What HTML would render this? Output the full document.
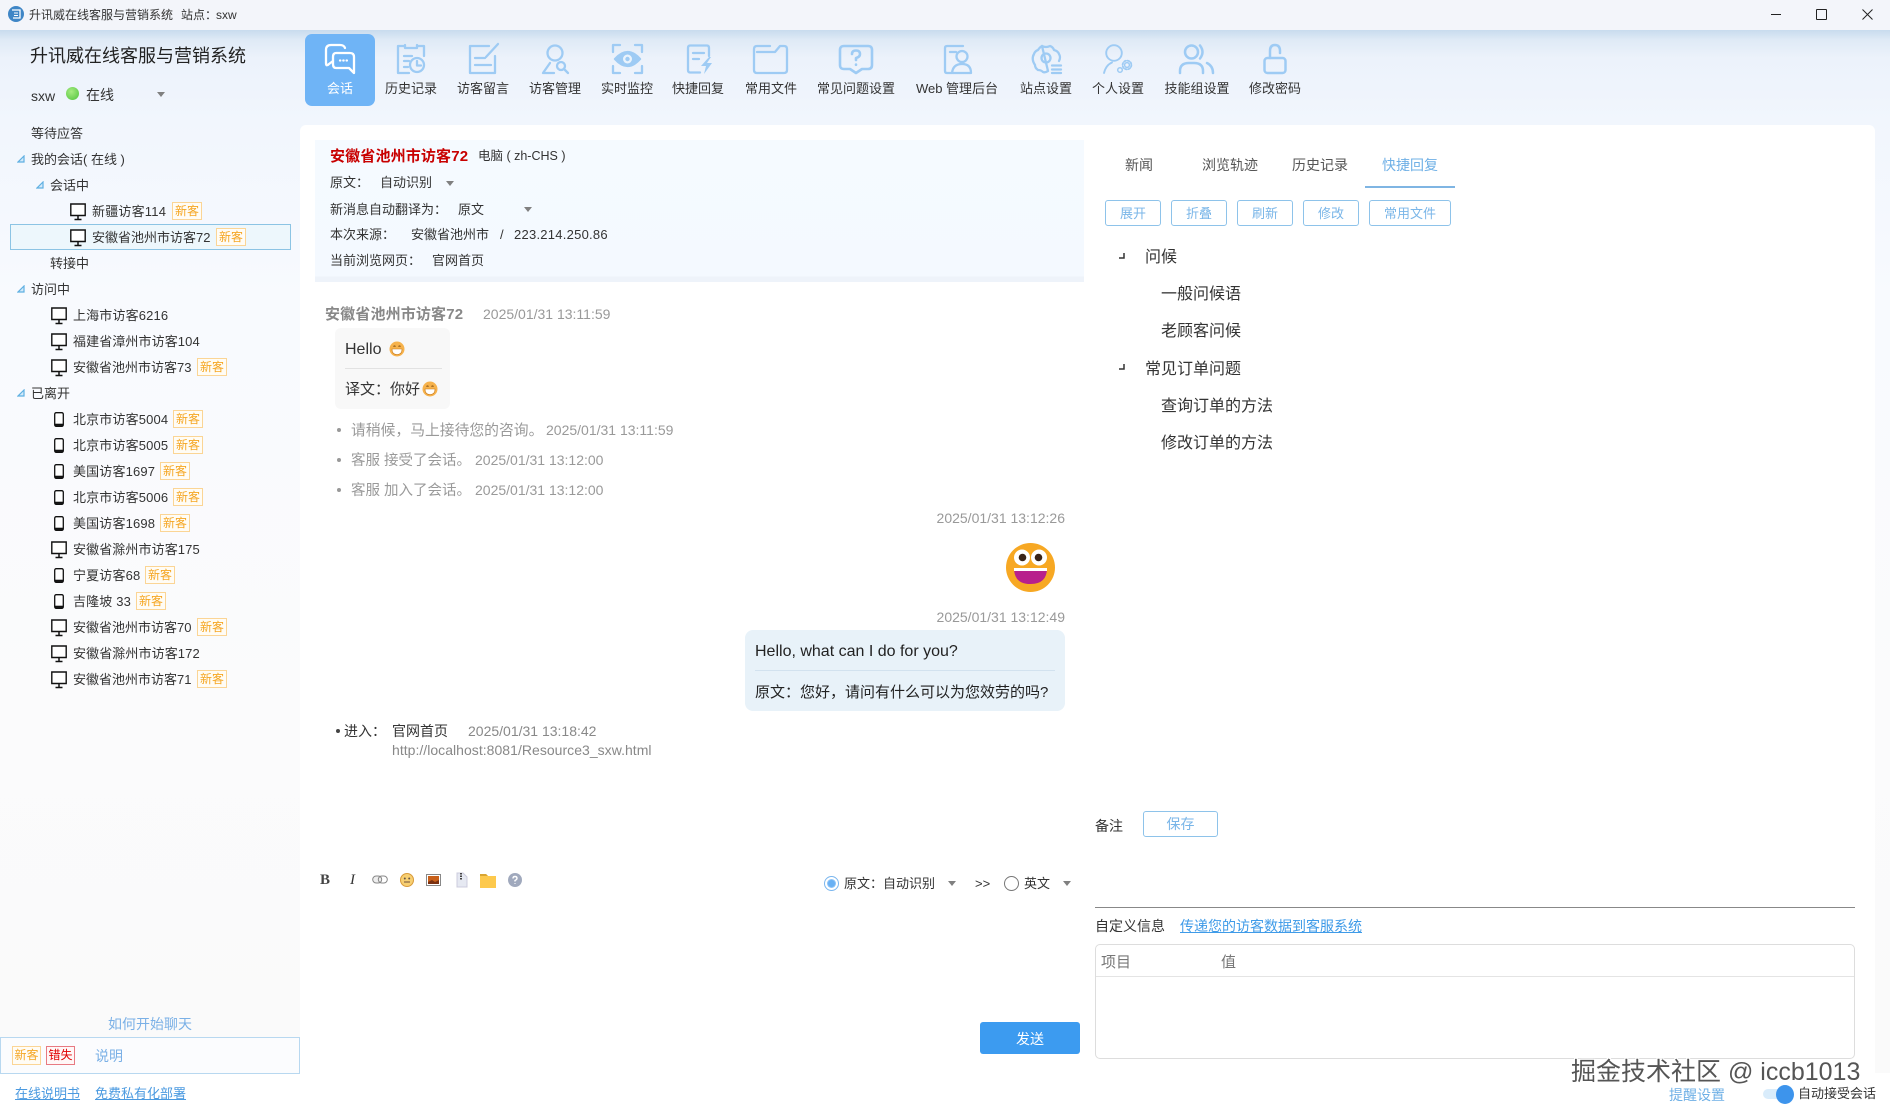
<!DOCTYPE html>
<html lang="zh-CN"><head><meta charset="utf-8"><title>升讯威在线客服与营销系统</title>
<style>
html,body{margin:0;padding:0;width:1890px;height:1114px;overflow:hidden}
body{position:relative;font-family:"Liberation Sans","Noto Sans CJK SC",sans-serif;font-size:13px;color:#333;background:linear-gradient(#c8dbee 30px,#dfeaf6 40px,#ecf2fb 58px,#f1f6fd 120px,#f8fafe 300px,#fbfbfc 700px,#fafafa 1073px)}
.a{position:absolute}
.t{position:absolute;white-space:nowrap;line-height:20px;height:20px}
.r{margin-top:1px}
.b{position:absolute;box-sizing:border-box;width:30px;height:18px;border:1px solid #fbd595;background:#fffcf5;color:#f5a623;font-size:12px;line-height:16px;text-align:center}
.arr{position:absolute;width:0;height:0;border-left:4px solid transparent;border-right:4px solid transparent;border-top:5px solid #808080}
.btn{position:absolute;box-sizing:border-box;height:26px;top:200px;border:1px solid #8ec3ea;border-radius:3px;color:#7ab6e8;text-align:center;line-height:25px;font-size:13px;background:#fff}
.lbl{position:absolute;top:79px;line-height:20px;white-space:nowrap;transform:translateX(-50%);color:#333;font-size:13px}
.ic{position:absolute;top:44px;overflow:visible;fill:none;stroke:#9ecbf4;stroke-width:2.300;stroke-linecap:round;stroke-linejoin:round}
.g{color:#999;font-size:14px}
svg{display:block}
</style></head><body>
<svg width="0" height="0" style="position:absolute"><defs>
<symbol id="m" viewBox="0 0 16 18"><path d="M.8 1h14.400v11.500H.8z" fill="#fff" stroke="#111" stroke-width="1.400"/><path d="M8 13v3M4.500 16.500h7" stroke="#111" stroke-width="1.500" fill="none"/></symbol>
<symbol id="p" viewBox="0 0 10 15"><rect x=".7" y=".7" width="8.600" height="13.600" rx="1.500" fill="#fff" stroke="#111" stroke-width="1.300"/><path d="M1 12.800h8" stroke="#111" stroke-width="2.200"/></symbol>
<symbol id="tr" viewBox="0 0 8 8"><path d="M7 1V7H1Z" fill="#d5eafa" stroke="#5fb0e2" stroke-width="1.200"/></symbol>
<symbol id="gr" viewBox="0 0 16 16"><circle cx="8" cy="8" r="7.500" fill="#f6b24c"/><path d="M3 8h10q0 5.500-5 5.500t-5-5.500z" fill="#fff" stroke="#c87818" stroke-width=".6"/><path d="M4.500 5.500q1-1 2 0M9.500 5.500q1-1 2 0" stroke="#7a4a10" fill="none"/></symbol>
</defs></svg>

<!-- title bar -->
<div class="a" style="left:0;top:0;width:1890px;height:30px;background:#f3f5fa"></div>
<svg class="a" style="left:8px;top:6px" width="16" height="16" viewBox="0 0 16 16"><circle cx="8" cy="8" r="8" fill="#3f86c6"/><path d="M4 4h8v8H5" fill="none" stroke="#fff" stroke-width="1.300"/><path d="M6 7h4M6 9.500h4" stroke="#fff"/></svg>
<div class="t" style="left:29px;top:5px;font-size:12px">升讯威在线客服与营销系统</div>
<div class="t" style="left:181px;top:5px;font-size:12px">站点：</div>
<div class="t" style="left:216px;top:5px;font-size:12px">sxw</div>
<div class="a" style="left:1771px;top:14px;width:10px;height:1px;background:#222"></div>
<div class="a" style="left:1816px;top:9px;width:9px;height:9px;border:1px solid #222;border-radius:1px"></div>
<svg class="a" style="left:1862px;top:9px" width="11" height="11"><path d="M.5.500l10 10M10.500.500l-10 10" stroke="#222"/></svg>

<!-- left header -->
<div class="t" style="left:30px;top:44px;font-size:18px;line-height:24px;height:24px;color:#222">升讯威在线客服与营销系统</div>
<div class="t" style="left:31px;top:86px;font-size:14px">sxw</div>
<div class="a" style="left:66px;top:87px;width:13px;height:13px;border-radius:50%;background:radial-gradient(circle at 40% 35%,#a6ec80,#4fc23c)"></div>
<div class="t" style="left:86px;top:85px;font-size:14px">在线</div>
<div class="arr" style="left:157px;top:92px"></div>

<!-- toolbar -->
<div class="a" style="left:305px;top:34px;width:70px;height:72px;background:#6fb4f6;border-radius:7px"></div>
<svg class="ic" style="left:325px;stroke:#fff" width="30" height="30" viewBox="0 0 30 30"><path d="M20 4Q19 1 15 1H6Q1 1 1 6V19Q1 23 4 20L8 17"/><path d="M11 9H25Q29 9 29 13V29L24 24H11Q8 24 8 20V13Q8 9 11 9Z"/><path d="M15 16.500h.3M18.300 16.500h.3M21.600 16.500h.3"/></svg>
<div class="lbl" style="left:340px;color:#fff">会话</div>

<svg class="ic" style="left:397px" width="28" height="30" viewBox="0 0 28 30"><path d="M7 2H1V29H12M21 2H27V12"/><path d="M8 1V4H20V1"/><path d="M7 12H15M7 17H12M7 23H11"/><circle cx="20" cy="21" r="7"/><path d="M20 17V21.500H24"/></svg>
<div class="lbl" style="left:411px">历史记录</div>

<svg class="ic" style="left:468px" width="30" height="30" viewBox="0 0 30 30"><path d="M21 2H2V29H27V12"/><path d="M30 0L18 13"/><path d="M7 14H17M7 21H23"/></svg>
<div class="lbl" style="left:483px">访客留言</div>

<svg class="ic" style="left:541px" width="28" height="30" viewBox="0 0 28 30"><circle cx="14" cy="9" r="7.500"/><path d="M9 19L2 29H13"/><circle cx="20" cy="22" r="4"/><path d="M23 25L27 29"/></svg>
<div class="lbl" style="left:555px">访客管理</div>

<svg class="ic" style="left:612px" width="31" height="30" viewBox="0 0 31 30"><path d="M1 8V1H8M23 1H30V8M30 22V29H23M8 29H1V22"/><path d="M3 15Q15.500 1 28 15Q15.500 29 3 15Z" fill="#9ecbf4"/><circle cx="15.500" cy="15" r="4.500" fill="#eaf3fc" stroke="none"/><circle cx="15.500" cy="15" r="2.200" fill="#9ecbf4" stroke="none"/></svg>
<div class="lbl" style="left:627px">实时监控</div>

<svg class="ic" style="left:687px" width="25" height="30" viewBox="0 0 25 30"><path d="M22 12V4Q22 1.500 20 1.500H3Q1 1.500 1 4V26Q1 28.500 3 28.500H13"/><path d="M6 9H17M6 15H12"/><path d="M22 13L14 22H19L17 30L25 19H20L24 13Z" fill="#9ecbf4" stroke="none"/></svg>
<div class="lbl" style="left:698px">快捷回复</div>

<svg class="ic" style="left:753px" width="35" height="30" viewBox="0 0 35 30"><path d="M4 8H22L27 2H31Q34 2 34 5V26Q34 29 31 29H4Q1 29 1 26V5Q1 2 4 2H17"/></svg>
<div class="lbl" style="left:771px">常用文件</div>

<svg class="ic" style="left:839px;stroke-width:2.600" width="34" height="30" viewBox="0 0 34 30"><path d="M5 2H29Q33 2 33 6V21Q33 25 29 25H23L17 29L11 25H5Q1 25 1 21V6Q1 2 5 2Z"/><path d="M13 10Q13 6.500 17 6.500Q21 6.500 21 10Q21 13 17 14V16"/><path d="M17 20.500V20.800"/></svg>
<div class="lbl" style="left:856px">常见问题设置</div>

<svg class="ic" style="left:944px" width="28" height="30" viewBox="0 0 28 30"><path d="M19 2H3Q1 2 1 4V27Q1 29 3 29H27Q27 20 18 20Q9 20 8 29"/><path d="M6 8H12"/><circle cx="18" cy="12.500" r="5.500"/></svg>
<div class="lbl" style="left:957px">Web 管理后台</div>

<svg class="ic" style="left:1031px" width="31" height="30" viewBox="0 0 31 30"><path d="M11 2Q15 4 19 2Q22 3 23 6Q27 7 28 10Q30 13 28 17M17 27Q14 29 12 28Q10 26 7 26Q4 24 4 21Q0 15 3 10Q4 7 7 6Q9 3 11 2Z"/><circle cx="15" cy="14" r="4.500"/><path d="M21 21.500H30M21 25.500H30M21 29H30"/></svg>
<div class="lbl" style="left:1046px">站点设置</div>

<svg class="ic" style="left:1103px;stroke-width:1.900" width="30" height="30" viewBox="0 0 30 30"><circle cx="11" cy="9" r="7.800"/><path d="M1 29Q3 21 9 18.500"/><circle cx="24" cy="21" r="2.400" stroke-width="1.500"/><circle cx="24" cy="21" r="4.400" stroke-width="1.800" stroke-dasharray="1.800 1.700"/><circle cx="17" cy="26" r="2.300" stroke-width="1.500"/></svg>
<div class="lbl" style="left:1118px">个人设置</div>

<svg class="ic" style="left:1179px;stroke-width:2.500" width="35" height="30" viewBox="0 0 35 30"><circle cx="12.500" cy="8" r="6.500"/><path d="M21 1.500Q26 8 21 14.500"/><path d="M1 29V27Q1 19 10 19H15Q24 19 24 27V29"/><path d="M28 19Q34 22 34 29"/></svg>
<div class="lbl" style="left:1197px">技能组设置</div>

<svg class="ic" style="left:1263px;stroke-width:2.500" width="24" height="30" viewBox="0 0 24 30"><rect x="1.500" y="14" width="21" height="15" rx="3"/><path d="M7 14V7Q7 1 12 1Q17 1 17 7V9"/></svg>
<div class="lbl" style="left:1275px">修改密码</div>

<!-- sidebar tree -->
<div class="t r" style="left:31px;top:123px">等待应答</div>
<svg class="a" style="left:17px;top:155px" width="8" height="8"><use href="#tr"/></svg>
<div class="t r" style="left:31px;top:149px">我的会话( 在线 )</div>
<svg class="a" style="left:36px;top:181px" width="8" height="8"><use href="#tr"/></svg>
<div class="t r" style="left:50px;top:175px">会话中</div>
<svg class="a" style="left:70px;top:203px" width="16" height="18"><use href="#m"/></svg>
<div class="t r" style="left:92px;top:201px;letter-spacing:.2px">新疆访客114</div><div class="b" style="left:172px;top:202px">新客</div>
<div class="a" style="left:10px;top:224px;width:279px;height:24px;border:1px solid #8cc4e4;background:#edf7fc"></div>
<svg class="a" style="left:70px;top:229px" width="16" height="18"><use href="#m"/></svg>
<div class="t r" style="left:92px;top:227px">安徽省池州市访客72</div><div class="b" style="left:216px;top:228px">新客</div>
<div class="t r" style="left:50px;top:253px">转接中</div>
<svg class="a" style="left:17px;top:285px" width="8" height="8"><use href="#tr"/></svg>
<div class="t r" style="left:31px;top:279px">访问中</div>

<svg class="a" style="left:51px;top:307px" width="16" height="18"><use href="#m"/></svg><div class="t r" style="left:73px;top:305px;letter-spacing:.15px">上海市访客6216</div>
<svg class="a" style="left:51px;top:333px" width="16" height="18"><use href="#m"/></svg><div class="t r" style="left:73px;top:331px;letter-spacing:.1px">福建省漳州市访客104</div>
<svg class="a" style="left:51px;top:359px" width="16" height="18"><use href="#m"/></svg><div class="t r" style="left:73px;top:357px">安徽省池州市访客73</div><div class="b" style="left:197px;top:358px">新客</div>
<svg class="a" style="left:17px;top:389px" width="8" height="8"><use href="#tr"/></svg>
<div class="t r" style="left:31px;top:383px">已离开</div>
<svg class="a" style="left:54px;top:412px" width="10" height="15"><use href="#p"/></svg><div class="t r" style="left:73px;top:409px;letter-spacing:.15px">北京市访客5004</div><div class="b" style="left:173px;top:410px">新客</div>
<svg class="a" style="left:54px;top:438px" width="10" height="15"><use href="#p"/></svg><div class="t r" style="left:73px;top:435px;letter-spacing:.15px">北京市访客5005</div><div class="b" style="left:173px;top:436px">新客</div>
<svg class="a" style="left:54px;top:464px" width="10" height="15"><use href="#p"/></svg><div class="t r" style="left:73px;top:461px;letter-spacing:.15px">美国访客1697</div><div class="b" style="left:160px;top:462px">新客</div>
<svg class="a" style="left:54px;top:490px" width="10" height="15"><use href="#p"/></svg><div class="t r" style="left:73px;top:487px;letter-spacing:.15px">北京市访客5006</div><div class="b" style="left:173px;top:488px">新客</div>
<svg class="a" style="left:54px;top:516px" width="10" height="15"><use href="#p"/></svg><div class="t r" style="left:73px;top:513px;letter-spacing:.15px">美国访客1698</div><div class="b" style="left:160px;top:514px">新客</div>
<svg class="a" style="left:51px;top:541px" width="16" height="18"><use href="#m"/></svg><div class="t r" style="left:73px;top:539px;letter-spacing:.1px">安徽省滁州市访客175</div>
<svg class="a" style="left:54px;top:568px" width="10" height="15"><use href="#p"/></svg><div class="t r" style="left:73px;top:565px;letter-spacing:.15px">宁夏访客68</div><div class="b" style="left:145px;top:566px">新客</div>
<svg class="a" style="left:54px;top:594px" width="10" height="15"><use href="#p"/></svg><div class="t r" style="left:73px;top:591px;letter-spacing:.15px">吉隆坡 33</div><div class="b" style="left:136px;top:592px">新客</div>
<svg class="a" style="left:51px;top:619px" width="16" height="18"><use href="#m"/></svg><div class="t r" style="left:73px;top:617px">安徽省池州市访客70</div><div class="b" style="left:197px;top:618px">新客</div>
<svg class="a" style="left:51px;top:645px" width="16" height="18"><use href="#m"/></svg><div class="t r" style="left:73px;top:643px;letter-spacing:.1px">安徽省滁州市访客172</div>
<svg class="a" style="left:51px;top:671px" width="16" height="18"><use href="#m"/></svg><div class="t r" style="left:73px;top:669px">安徽省池州市访客71</div><div class="b" style="left:197px;top:670px">新客</div>

<div class="t" style="left:108px;top:1014px;font-size:14px;color:#7ab0e6">如何开始聊天</div>

<!-- card -->
<div class="a" style="left:300px;top:125px;width:1575px;height:989px;background:#fff;border-radius:6px 6px 0 0"></div>
<div class="a" style="left:0;top:1073px;width:1890px;height:41px;background:#fff"></div>
<div class="a" style="left:0;top:1037px;width:298px;height:35px;border:1px solid #b8d8f0;background:#fbfcfe"></div>
<div class="b" style="left:12px;top:1046px;width:29px;height:19px;line-height:17px">新客</div>
<div class="b" style="left:46px;top:1046px;width:29px;height:19px;line-height:17px;border-color:#e87a82;background:#fff7f7;color:#e00000">错失</div>
<div class="t" style="left:95px;top:1046px;font-size:14px;color:#7ab0e6">说明</div>
<div class="t" style="left:15px;top:1084px;color:#4b9ae0;text-decoration:underline">在线说明书</div>
<div class="t" style="left:95px;top:1084px;color:#4b9ae0;text-decoration:underline">免费私有化部署</div>

<!-- visitor header -->
<div class="a" style="left:315px;top:140px;width:769px;height:142px;background:linear-gradient(#f5faff 0,#f4f9ff 136px,#eef3fa 137px)"></div>
<div class="t r" style="left:330px;top:146px;font-size:15px;font-weight:bold;color:#c80000;letter-spacing:.15px">安徽省池州市访客72</div>
<div class="t" style="left:478px;top:146px;font-size:12.500px">电脑 ( zh-CHS )</div>
<div class="t" style="left:330px;top:173px">原文：</div><div class="t" style="left:380px;top:173px">自动识别</div><div class="arr" style="left:446px;top:181px"></div>
<div class="t r" style="left:330px;top:199px">新消息自动翻译为：</div><div class="t r" style="left:458px;top:199px">原文</div><div class="arr" style="left:524px;top:207px"></div>
<div class="t" style="left:330px;top:225px">本次来源：</div><div class="t" style="left:411px;top:225px">安徽省池州市</div><div class="t" style="left:500px;top:225px">/</div><div class="t" style="left:514px;top:225px;letter-spacing:.25px">223.214.250.86</div>
<div class="t" style="left:330px;top:251px">当前浏览网页：</div><div class="t" style="left:432px;top:251px">官网首页</div>

<!-- chat -->
<div class="t r" style="left:325px;top:304px;font-size:15px;font-weight:bold;color:#888;letter-spacing:.15px">安徽省池州市访客72</div>
<div class="t g" style="left:483px;top:304px">2025/01/31 13:11:59</div>
<div class="a" style="left:335px;top:328px;width:115px;height:81px;background:#f8f8f8;border-radius:6px"></div>
<div class="t r" style="left:345px;top:339px;font-size:16px">Hello</div>
<svg class="a" style="left:389px;top:340px" width="16" height="18" viewBox="0 0 16 18" preserveAspectRatio="none"><use href="#gr" width="16" height="18"/></svg>
<div class="a" style="left:345px;top:368px;width:97px;height:1px;background:#e2e2e2"></div>
<div class="t" style="left:345px;top:380px;font-size:15px">译文：你好</div>
<svg class="a" style="left:422px;top:380px" width="16" height="18" viewBox="0 0 16 18" preserveAspectRatio="none"><use href="#gr" width="16" height="18"/></svg>

<div class="a" style="left:337px;top:428px;width:4px;height:4px;border-radius:50%;background:#999"></div>
<div class="t g r" style="left:351px;top:420px;font-size:14.800px">请稍候，马上接待您的咨询。</div><div class="t g" style="left:546px;top:420px">2025/01/31 13:11:59</div>
<div class="a" style="left:337px;top:458px;width:4px;height:4px;border-radius:50%;background:#999"></div>
<div class="t g r" style="left:351px;top:450px;font-size:14.500px">客服 接受了会话。</div><div class="t g" style="left:475px;top:450px">2025/01/31 13:12:00</div>
<div class="a" style="left:337px;top:488px;width:4px;height:4px;border-radius:50%;background:#999"></div>
<div class="t g r" style="left:351px;top:480px;font-size:14.500px">客服 加入了会话。</div><div class="t g" style="left:475px;top:480px">2025/01/31 13:12:00</div>

<div class="t g" style="right:825px;top:508px">2025/01/31 13:12:26</div>
<svg class="a" style="left:1006px;top:543px" width="49" height="49" viewBox="0 0 49 49"><circle cx="24.500" cy="24.500" r="24.500" fill="#f7a823"/><ellipse cx="16" cy="14.500" rx="8" ry="8" fill="#fff"/><ellipse cx="33" cy="14.500" rx="8" ry="8" fill="#fff"/><circle cx="16.500" cy="14.500" r="3.800" fill="#3a2418"/><circle cx="32.500" cy="14.500" r="3.800" fill="#3a2418"/><path d="M8 25H41Q41 41 24.500 41Q8 41 8 25Z" fill="#b81f8c"/><path d="M8 25H41V28H8Z" fill="#fff"/></svg>
<div class="t g" style="right:825px;top:607px">2025/01/31 13:12:49</div>
<div class="a" style="left:745px;top:630px;width:320px;height:81px;background:#e8f2f9;border-radius:8px"></div>
<div class="t r" style="left:755px;top:641px;font-size:16px;color:#222">Hello, what can I do for you?</div>
<div class="a" style="left:755px;top:670px;width:300px;height:1px;background:#d2e2ef"></div>
<div class="t r" style="left:755px;top:682px;font-size:15px;color:#222">原文：您好，请问有什么可以为您效劳的吗?</div>

<div class="a" style="left:336px;top:729px;width:4px;height:4px;border-radius:50%;background:#444"></div>
<div class="t" style="left:344px;top:721px;font-size:14px">进入：</div>
<div class="t" style="left:392px;top:721px;font-size:14px">官网首页</div>
<div class="t" style="left:468px;top:721px;font-size:14px;color:#888">2025/01/31 13:18:42</div>
<div class="t" style="left:392px;top:740px;font-size:14px;color:#888;letter-spacing:.03px">http://localhost:8081/Resource3_sxw.html</div>

<!-- editor toolbar -->
<div class="t" style="left:320px;top:870px;font:bold 15px/20px 'Liberation Serif',serif;color:#444">B</div>
<div class="t" style="left:350px;top:870px;font:italic 15px/20px 'Liberation Serif',serif;color:#333">I</div>
<svg class="a" style="left:372px;top:875px" width="16" height="10" viewBox="0 0 16 10"><rect x=".7" y="1" width="9" height="7" rx="3.500" fill="#eee" stroke="#888"/><rect x="6.300" y="1" width="9" height="7" rx="3.500" fill="none" stroke="#888"/></svg>
<svg class="a" style="left:400px;top:873px" width="14" height="14" viewBox="0 0 14 14"><circle cx="7" cy="7" r="6.500" fill="#f7cf72" stroke="#d89a3a"/><circle cx="4.800" cy="5.500" r="1" fill="#654"/><circle cx="9.200" cy="5.500" r="1" fill="#654"/><path d="M4 9h6" stroke="#864" stroke-width="1.200"/></svg>
<svg class="a" style="left:426px;top:874px" width="15" height="12" viewBox="0 0 15 12"><rect x=".5" y=".5" width="14" height="11" fill="#fff" stroke="#888"/><rect x="2" y="2" width="11" height="8" fill="#c9601a"/><path d="M2 8l4-2 3 2 4-2v4H2z" fill="#7a3010"/></svg>
<svg class="a" style="left:456px;top:872px" width="12" height="16" viewBox="0 0 12 16"><path d="M1 1h6l4 4v10H1z" fill="#e6e9f2" stroke="#ccd"/><path d="M5 1v7" stroke="#444" stroke-width="2" stroke-dasharray="1.500 1"/></svg>
<svg class="a" style="left:480px;top:873px" width="16" height="15" viewBox="0 0 16 15"><path d="M0 1h6l2 2h8v12H0z" fill="#fdc94d"/><path d="M0 1h6l2 2H0z" fill="#d9a532"/></svg>
<svg class="a" style="left:508px;top:873px" width="14" height="14" viewBox="0 0 14 14"><circle cx="7" cy="7" r="7" fill="#a0a9bd"/><path d="M5 5.500Q5 3.500 7 3.500Q9 3.500 9 5.300Q9 6.700 7 7.500V8.500M7 10.300V11" stroke="#fff" stroke-width="1.400" fill="none"/></svg>

<div class="a" style="left:824px;top:876px;box-sizing:border-box;width:15px;height:15px;border:1px solid #7ab6ee;border-radius:50%;background:#fff"></div>
<div class="a" style="left:828px;top:880px;width:7px;height:7px;border-radius:50%;background:#69b1f4;box-shadow:0 0 0 1px #8fc4f6"></div>
<div class="t r" style="left:844px;top:873px">原文：</div><div class="t r" style="left:883px;top:873px">自动识别</div>
<div class="arr" style="left:948px;top:881px"></div>
<div class="t r" style="left:975px;top:873px;font-size:13px">&gt;&gt;</div>
<div class="a" style="left:1004px;top:876px;box-sizing:border-box;width:15px;height:15px;border:1px solid #777;border-radius:50%;background:#fff"></div>
<div class="t r" style="left:1024px;top:873px">英文</div>
<div class="arr" style="left:1063px;top:881px"></div>
<div class="a" style="left:980px;top:1022px;width:100px;height:32px;background:#3c9bf0;border-radius:3px;color:#fff;text-align:center;line-height:34px;font-size:14px">发送</div>

<!-- right tabs -->
<div class="t" style="left:1125px;top:155px;font-size:14px;color:#555">新闻</div>
<div class="t" style="left:1202px;top:155px;font-size:14px;color:#555">浏览轨迹</div>
<div class="t" style="left:1292px;top:155px;font-size:14px;color:#555">历史记录</div>
<div class="t" style="left:1382px;top:155px;font-size:14px;color:#6fb0e6">快捷回复</div>
<div class="a" style="left:1365px;top:186px;width:90px;height:2px;background:#7fb5e3"></div>
<div class="btn" style="left:1105px;width:56px">展开</div>
<div class="btn" style="left:1171px;width:56px">折叠</div>
<div class="btn" style="left:1237px;width:56px">刷新</div>
<div class="btn" style="left:1303px;width:56px">修改</div>
<div class="btn" style="left:1369px;width:82px">常用文件</div>

<svg class="a" style="left:1118px;top:253px" width="7" height="6"><path d="M6 0V5H1" fill="none" stroke="#333" stroke-width="1.500"/></svg>
<div class="t r" style="left:1145px;top:247px;font-size:16px">问候</div>
<div class="t r" style="left:1161px;top:284px;font-size:16px">一般问候语</div>
<div class="t" style="left:1161px;top:322px;font-size:16px">老顾客问候</div>
<svg class="a" style="left:1118px;top:364px" width="7" height="6"><path d="M6 0V5H1" fill="none" stroke="#333" stroke-width="1.500"/></svg>
<div class="t r" style="left:1145px;top:359px;font-size:16px">常见订单问题</div>
<div class="t r" style="left:1161px;top:396px;font-size:16px">查询订单的方法</div>
<div class="t r" style="left:1161px;top:433px;font-size:16px">修改订单的方法</div>

<!-- notes -->
<div class="t r" style="left:1095px;top:815px;font-size:14px">备注</div>
<div class="a" style="left:1143px;top:811px;box-sizing:border-box;width:75px;height:26px;border:1px solid #8ec3ea;border-radius:3px;color:#7ab6e8;text-align:center;line-height:25px;font-size:14px">保存</div>
<div class="a" style="left:1095px;top:907px;width:760px;height:1px;background:#888"></div>
<div class="t r" style="left:1095px;top:915px;font-size:14px">自定义信息</div>
<div class="t r" style="left:1180px;top:915px;font-size:14px;color:#3f9be8;text-decoration:underline">传递您的访客数据到客服系统</div>
<div class="a" style="left:1095px;top:944px;box-sizing:border-box;width:760px;height:115px;border:1px solid #ddd;border-radius:5px"></div>
<div class="a" style="left:1096px;top:976px;width:758px;height:1px;background:#e4e4e4"></div>
<div class="t r" style="left:1101px;top:952px;font-size:15px;color:#777">项目</div>
<div class="t r" style="left:1221px;top:952px;font-size:15px;color:#777">值</div>

<!-- footer right -->
<div class="t" style="left:1669px;top:1085px;font-size:14px;color:#6fb0e6">提醒设置</div>
<div class="a" style="left:1763px;top:1089px;width:24px;height:10px;border-radius:5px;background:#d9ecfb"></div>
<div class="a" style="left:1776px;top:1085px;width:18px;height:19px;border-radius:50%;background:#3d94ec"></div>
<div class="t" style="left:1798px;top:1084px">自动接受会话</div>
<div class="t" style="left:1571px;top:1057px;height:30px;line-height:30px;font-size:25px;color:#555;text-shadow:1px 1px 0 #fff,-1px -1px 0 #fff,1px -1px 0 #fff,-1px 1px 0 #fff">掘金技术社区 @ iccb1013</div>
</body></html>
